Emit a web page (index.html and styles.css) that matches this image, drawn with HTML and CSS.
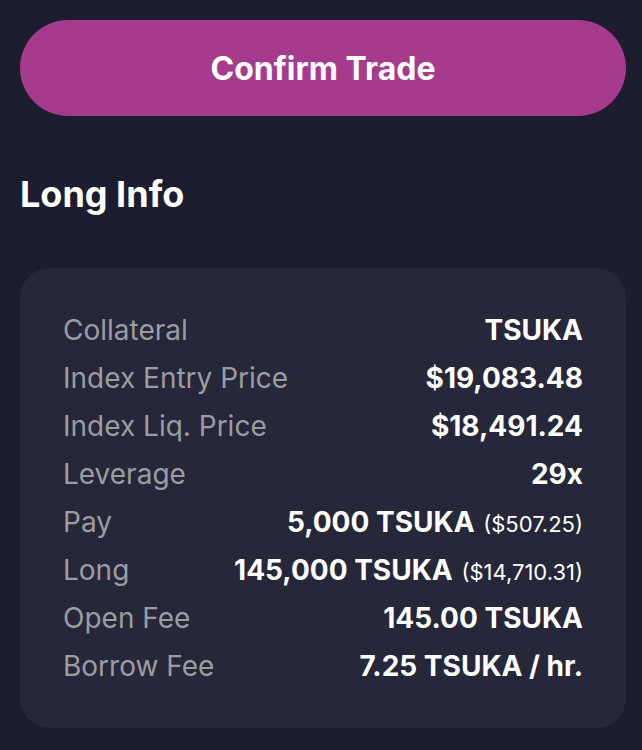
FILE: index.html
```html
<!DOCTYPE html>
<html lang="en">
<head>
    <meta charset="UTF-8">
    <meta name="viewport" content="width=device-width, initial-scale=1.0">
    <title>Confirm Long</title>
    <link rel="stylesheet" href="styles.css">
</head>
<body>
    <div class="container">
        <button class="confirm-button">Confirm Trade</button>

        <h2 class="section-title">Long Info</h2>

        <div class="info-card">
            <div class="info-row">
                <span class="label">Collateral</span>
                <span class="value">TSUKA</span>
            </div>
            <div class="info-row">
                <span class="label">Index Entry Price</span>
                <span class="value">$19,083.48</span>
            </div>
            <div class="info-row">
                <span class="label">Index Liq. Price</span>
                <span class="value">$18,491.24</span>
            </div>
            <div class="info-row">
                <span class="label">Leverage</span>
                <span class="value">29x</span>
            </div>
            <div class="info-row">
                <span class="label">Pay</span>
                <span class="value">5,000 TSUKA <span class="usd">($507.25)</span></span>
            </div>
            <div class="info-row">
                <span class="label">Long</span>
                <span class="value">145,000 TSUKA <span class="usd">($14,710.31)</span></span>
            </div>
            <div class="info-row">
                <span class="label">Open Fee</span>
                <span class="value">145.00 TSUKA</span>
            </div>
            <div class="info-row">
                <span class="label">Borrow Fee</span>
                <span class="value">7.25 TSUKA / hr.</span>
            </div>
        </div>
    </div>
</body>
</html>
```

FILE: styles.css
```css
body {
    font-family: Inter, "Noto Sans", sans-serif;
    margin: 0;
    padding: 0;
    background: #1c1d2f;
    color: #ffffff;
}

.container {
    padding: 20px 16px 20px 20px;
}

.confirm-button {
    display: block;
    width: 100%;
    height: 96px;
    border: none;
    border-radius: 48px;
    background: #a63a8d;
    color: #ffffff;
    font-family: inherit;
    font-size: 32px;
    font-weight: 700;
    cursor: pointer;
}

.section-title {
    margin: 58px 0 54px;
    font-size: 36px;
    font-weight: 700;
    line-height: 40px;
}

.info-card {
    background: #262739;
    border-radius: 30px;
    padding: 38px 43px 38px 43px;
}

.info-row {
    display: flex;
    justify-content: space-between;
    align-items: baseline;
    height: 48px;
    line-height: 48px;
    font-size: 28px;
    white-space: nowrap;
}

.label {
    color: #9c9ca3;
}

.value {
    font-weight: 700;
}

.usd {
    font-size: 22px;
    font-weight: 400;
    margin-left: 2px;
}
```
